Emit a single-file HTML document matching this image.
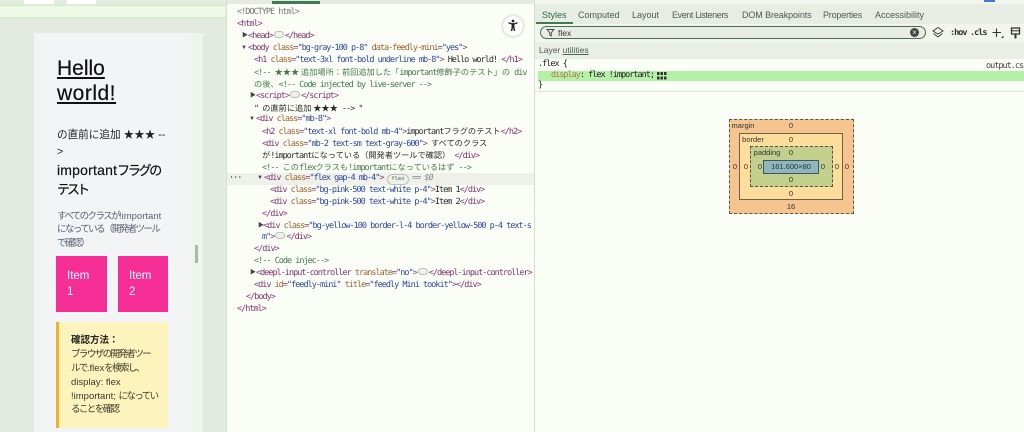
<!DOCTYPE html>
<html lang="ja"><head><meta charset="utf-8"><title>DevTools</title>
<style>
html,body{margin:0;padding:0}
html{background:#fbfdf7}
body{width:1024px;height:432px;overflow:hidden;position:relative;background:#fbfdf7;font-family:"Liberation Sans","Noto Sans CJK JP",sans-serif;filter:blur(.3px)}
.b{position:absolute}
.tx{position:absolute;white-space:pre;color:#333;line-height:14px;transform:translateY(-7px)}
.q{letter-spacing:-1.6px}
.s{font-size:9.5px}
.l{position:absolute;white-space:pre;font-family:"DejaVu Sans Mono","Noto Sans CJK JP",monospace;font-size:8.5px;letter-spacing:-.997px;line-height:12px;height:12px;color:#555;text-rendering:geometricPrecision;transform:translateY(-6px)}
.l i{font-style:normal;font-family:"Noto Sans CJK JP",sans-serif;font-size:8.2px;letter-spacing:0}
.t{color:#86336f}.a{color:#a05f2c}.v{color:#2f46a0}.c{color:#447a4c}.k{color:#2a2a2a}
.tri{position:absolute;font-size:6px;line-height:6px;color:#444;transform:translateY(-3px)}
.dots{display:inline-block;width:8px;height:5px;border:1px solid #b8c4b0;border-radius:4px;vertical-align:0;margin:0 1px;background:#eef2ea}
.tab{position:absolute;top:9px;font-size:9px;line-height:12px;color:#4b5a50;white-space:pre}
.m{position:absolute;font-size:7.5px;line-height:10px;color:#333;transform:translate(-50%,-5px);white-space:pre}
</style></head><body>

<!-- left page pane -->
<div class="b" style="left:0;top:0;width:227px;height:432px;background:#e3eadf"></div>
<div class="b" style="left:24px;top:0;width:30px;height:4px;background:#fff"></div>
<div class="b" style="left:67px;top:0;width:29px;height:4px;background:#fff"></div>
<div class="b" style="left:0;top:5px;width:225px;height:13px;background:#eefae6;border-top:1px solid #d4eec8;border-bottom:1px solid #cdeec0;box-sizing:border-box"></div>
<div class="b" style="left:34px;top:33px;width:169px;height:399px;background:#f3f4f6"></div>
<div class="b" style="left:190px;top:33px;width:13px;height:399px;background:#eef5ea"></div>
<div class="b" style="left:195px;top:245px;width:3px;height:18px;background:#aeb6b2"></div>

<div class="tx" style="left:57px;top:69px;font-size:21px;line-height:24px;transform:translateY(-12px);color:#111;text-decoration:underline;-webkit-text-stroke:.2px #111">Hello</div>
<div class="tx" style="left:57px;top:94px;font-size:21px;line-height:24px;transform:translateY(-12px);color:#111;text-decoration:underline;letter-spacing:.5px;-webkit-text-stroke:.2px #111">world!</div>
<div class="tx" style="left:57px;top:135px;font-size:10.6px;color:#222">の直前に追加 ★★★ --</div>
<div class="tx" style="left:57px;top:152px;font-size:10.6px;color:#222">&gt;</div>
<div class="tx" style="left:57px;top:170px;font-size:14px;letter-spacing:.2px;color:#111;-webkit-text-stroke:.2px #111">important<span style="font-size:13px;letter-spacing:-2.3px">フラグの</span></div>
<div class="tx" style="left:57px;top:190px;font-size:13px;letter-spacing:-3px;color:#111;-webkit-text-stroke:.2px #111">テスト</div>
<div class="tx s" style="left:57px;top:217px;color:#5a6170"><span class="q">すべてのクラスが</span>!important</div>
<div class="tx s q" style="left:57px;top:230px;color:#5a6170">になっている（開発者ツール</div>
<div class="tx s q" style="left:57px;top:244px;color:#5a6170">で確認）</div>

<div class="b" style="left:56px;top:256px;width:51px;height:56px;background:#f52e96"></div>
<div class="b" style="left:118px;top:256px;width:50px;height:56px;background:#f52e96"></div>
<div class="tx" style="left:67px;top:276px;font-size:11.5px;color:#fff">Item</div>
<div class="tx" style="left:67px;top:292px;font-size:11.5px;color:#fff">1</div>
<div class="tx" style="left:129px;top:276px;font-size:11.5px;color:#fff">Item</div>
<div class="tx" style="left:129px;top:292px;font-size:11.5px;color:#fff">2</div>

<div class="b" style="left:56px;top:322px;width:112px;height:106px;background:#fdf4bd"></div>
<div class="b" style="left:56px;top:322px;width:3px;height:106px;background:#eab52a"></div>
<div class="tx s" style="left:71px;top:341px;color:#222;font-weight:bold">確認方法：</div>
<div class="tx s q" style="left:71px;top:355px;color:#3c3a2a">ブラウザの開発者ツー</div>
<div class="tx s" style="left:71px;top:369px;color:#3c3a2a"><span class="q">ルで</span>.flex<span class="q">を検索し、</span></div>
<div class="tx s" style="left:71px;top:383px;color:#3c3a2a">display: flex</div>
<div class="tx s" style="left:71px;top:397px;color:#3c3a2a">!important; <span class="q">になってい</span></div>
<div class="tx s q" style="left:71px;top:410px;color:#3c3a2a">ることを確認</div>

<!-- elements panel -->
<div class="b" style="left:226px;top:0;width:309px;height:432px;background:#fbfdf7;border-left:1px solid #cfe6c4;border-right:1px solid #cfe6c4;box-sizing:border-box"></div>
<div class="b" style="left:227px;top:0;width:307px;height:4px;background:#e6ebe2"></div>
<div class="b" style="left:272px;top:1px;width:48px;height:3px;background:#3f7a55"></div>
<div class="b" style="left:227px;top:173px;width:307px;height:12px;background:#eef0ea"></div>

<div class="b" style="left:503px;top:16px;width:20px;height:20px;border-radius:50%;background:#fff;box-shadow:0 0 3px #aab5a8"></div>
<svg class="b" style="left:507px;top:19px" width="12" height="13" viewBox="0 0 12 13"><circle cx="6" cy="2" r="1.4" fill="#222"/><path d="M1.5 3.8 L4.5 4.8 H7.5 L10.5 3.8" stroke="#222" stroke-width="1.3" fill="none"/><path d="M4.6 4.6 H7.4 V8 L8.2 12 H6.8 L6 8.8 L5.2 12 H3.8 L4.6 8Z" fill="#222"/></svg>

<div class="l" style="left:237px;top:12px;color:#777">&lt;!DOCTYPE html&gt;</div>
<div class="l t" style="left:237px;top:24px">&lt;html&gt;</div>
<div class="tri" style="left:242px;top:36px">▶</div>
<div class="l t" style="left:248px;top:36px">&lt;head&gt;<span class="dots"></span>&lt;/head&gt;</div>
<div class="tri" style="left:241px;top:48px">▼</div>
<div class="l t" style="left:248px;top:48px">&lt;body <span class="a">class</span>=<span class="v">"bg-gray-100 p-8"</span> <span class="a">data-feedly-mini</span>=<span class="v">"yes"</span>&gt;</div>
<div class="l t" style="left:254px;top:60px">&lt;h1 <span class="a">class</span>=<span class="v">"text-3xl font-bold underline mb-8"</span>&gt; <span class="k">Hello world! </span>&lt;/h1&gt;</div>
<div class="l c" style="left:254px;top:72px">&lt;!-- <i>★★★ 追加場所：前回追加した「</i>important<i>修飾子のテスト」の</i> div</div>
<div class="l c" style="left:254px;top:84px"><i>の後、</i>&lt;!-- Code injected by live-server --&gt;</div>
<div class="tri" style="left:250px;top:96px">▶</div>
<div class="l t" style="left:256px;top:96px">&lt;script&gt;<span class="dots"></span>&lt;/script&gt;</div>
<div class="l k" style="left:254px;top:108px">" <i>の直前に追加 ★★★</i> --&gt; "</div>
<div class="tri" style="left:249px;top:119px">▼</div>
<div class="l t" style="left:256px;top:119px">&lt;div <span class="a">class</span>=<span class="v">"mb-8"</span>&gt;</div>
<div class="l t" style="left:262px;top:131px">&lt;h2 <span class="a">class</span>=<span class="v">"text-xl font-bold mb-4"</span>&gt;<span class="k">important<i>フラグのテスト</i></span>&lt;/h2&gt;</div>
<div class="l t" style="left:262px;top:143px">&lt;div <span class="a">class</span>=<span class="v">"mb-2 text-sm text-gray-600"</span>&gt; <span class="k"><i>すべてのクラス</i></span></div>
<div class="l k" style="left:262px;top:155px"><i>が</i>!important<i>になっている（開発者ツールで確認）</i> <span class="t">&lt;/div&gt;</span></div>
<div class="l c" style="left:262px;top:167px">&lt;!-- <i>この</i>flex<i>クラスも</i>!important<i>になっているはず</i> --&gt;</div>
<div class="l k" style="left:229px;top:178px">···</div>
<div class="tri" style="left:257px;top:178px">▼</div>
<div class="l t" style="left:264px;top:178px">&lt;div <span class="a">class</span>=<span class="v">"flex gap-4 mb-4"</span>&gt;</div>
<div class="b" style="left:387px;top:174px;width:20px;height:9px;border:1px solid #b9c4b4;border-radius:6px;font:5.5px/9px 'DejaVu Sans Mono',monospace;color:#555;text-align:center;box-sizing:content-box">flex</div>
<div class="l" style="left:412px;top:178px;color:#888;font-style:italic">== $0</div>
<div class="l t" style="left:270px;top:190px">&lt;div <span class="a">class</span>=<span class="v">"bg-pink-500 text-white p-4"</span>&gt;<span class="k">Item 1</span>&lt;/div&gt;</div>
<div class="l t" style="left:270px;top:202px">&lt;div <span class="a">class</span>=<span class="v">"bg-pink-500 text-white p-4"</span>&gt;<span class="k">Item 2</span>&lt;/div&gt;</div>
<div class="l t" style="left:262px;top:214px">&lt;/div&gt;</div>
<div class="tri" style="left:258px;top:226px">▶</div>
<div class="l t" style="left:263px;top:226px">&lt;div <span class="a">class</span>=<span class="v">"bg-yellow-100 border-l-4 border-yellow-500 p-4 text-s</span></div>
<div class="l t" style="left:262px;top:237px"><span class="v">m"</span>&gt;<span class="dots"></span>&lt;/div&gt;</div>
<div class="l t" style="left:254px;top:249px">&lt;/div&gt;</div>
<div class="l c" style="left:254px;top:261px">&lt;!-- Code injec--&gt;</div>
<div class="tri" style="left:250px;top:273px">▶</div>
<div class="l t" style="left:256px;top:273px">&lt;deepl-input-controller <span class="a">translate</span>=<span class="v">"no"</span>&gt;<span class="dots"></span>&lt;/deepl-input-controller&gt;</div>
<div class="l t" style="left:254px;top:285px">&lt;div <span class="a">id</span>=<span class="v">"feedly-mini"</span> <span class="a">title</span>=<span class="v">"feedly Mini tookit"</span>&gt;&lt;/div&gt;</div>
<div class="l t" style="left:246px;top:297px">&lt;/body&gt;</div>
<div class="l t" style="left:237px;top:309px">&lt;/html&gt;</div>

<!-- styles panel -->
<div class="b" style="left:535px;top:0;width:489px;height:4px;background:#f3f6ef"></div>
<div class="b" style="left:535px;top:4px;width:489px;height:20px;background:#e8ede4"></div>
<div class="b" style="left:535px;top:24px;width:489px;height:18px;background:#f1f5ec"></div>
<div class="b" style="left:535px;top:42px;width:489px;height:17px;background:#e9eee6"></div>
<div class="b" style="left:984px;top:0;width:11px;height:2px;background:#3b78d8"></div>
<div class="tab" style="left:542px;color:#2f6b4a">Styles</div>
<div class="b" style="left:536px;top:22px;width:37px;height:2px;background:#3f7a55"></div>
<div class="tab" style="left:578px">Computed</div>
<div class="tab" style="left:632px">Layout</div>
<div class="tab" style="left:672px;letter-spacing:-.4px">Event Listeners</div>
<div class="tab" style="left:742px;letter-spacing:-.1px">DOM Breakpoints</div>
<div class="tab" style="left:823px;letter-spacing:-.2px">Properties</div>
<div class="tab" style="left:875px">Accessibility</div>

<div class="b" style="left:540px;top:26px;width:386px;height:13px;border:1.5px solid #4a6b58;border-radius:8px;background:#e8ede4;box-sizing:border-box"></div>
<svg class="b" style="left:546px;top:28px" width="9" height="9" viewBox="0 0 9 9"><path d="M1 1.5H8L5.2 4.8V8L3.8 7V4.8Z" fill="none" stroke="#444" stroke-width=".9"/></svg>
<div class="tab" style="left:558px;top:27px;font-size:8.5px;color:#333">flex</div>
<div class="b" style="left:910px;top:28px;width:9px;height:9px;border-radius:50%;background:#444;color:#eee;font:8px/9px 'Liberation Sans',sans-serif;text-align:center">×</div>
<svg class="b" style="left:932px;top:26px" width="12" height="13" viewBox="0 0 12 13"><path d="M6 1.5L11 5L6 8L1 5Z M1.5 7.5L6 11L10.5 7.5" fill="none" stroke="#444" stroke-width="1"/></svg>
<div class="l" style="left:950px;top:33px;color:#333;font-weight:bold">:hov</div>
<div class="l" style="left:970px;top:33px;color:#333;font-weight:bold">.cls</div>
<svg class="b" style="left:991px;top:27px" width="13" height="12" viewBox="0 0 13 12"><path d="M5.5 1.5V10 M1.5 5.5H10" stroke="#333" stroke-width="1.1"/><path d="M10 11L12.5 11L12.5 8.5Z" fill="#333"/></svg>
<svg class="b" style="left:1010px;top:27px" width="11" height="13" viewBox="0 0 11 13"><path d="M1.5 1H9.5V7H1.5Z" fill="none" stroke="#333" stroke-width="1.3"/><path d="M1.5 3.8H9.5" stroke="#333"/><path d="M4.5 7H6.5V11.5H4.5Z" fill="#333"/></svg>

<div class="tab" style="left:539px;top:44px;font-size:8.5px;color:#555">Layer <span style="text-decoration:underline;color:#4c6655">utilities</span></div>
<div class="b" style="left:535px;top:59px;width:489px;height:33px;background:#fbfdf7;border-bottom:1px solid #dbe6d4;box-sizing:border-box"></div>
<div class="b" style="left:538px;top:71px;width:486px;height:10px;background:#b4f0a8"></div>
<div class="l" style="left:538px;top:64px;color:#222">.flex {</div>
<div class="l" style="left:986px;top:66px;color:#444">output.cs</div>
<div class="l" style="left:551px;top:75px;color:#222"><span style="color:#b07a4a">display</span>: flex !important;</div>
<svg class="b" style="left:657px;top:72px" width="10" height="9" viewBox="0 0 10 9"><path d="M0 0h2.5v3H0zM3.5 0h2.5v3H3.5zM7 0h2.5v3H7zM0 4.5h2.5v3H0zM3.5 4.5h2.5v3H3.5zM7 4.5h2.5v3H7z" fill="#333"/></svg>
<div class="l" style="left:538px;top:85px;color:#222">}</div>

<!-- box model -->
<div class="b" style="left:729px;top:119px;width:125px;height:95px;background:#f6c48f;border:1px dashed #555;box-sizing:border-box"></div>
<div class="b" style="left:739px;top:133px;width:104px;height:67px;background:#fddd9b;border:1px solid #6e6248;box-sizing:border-box"></div>
<div class="b" style="left:750px;top:146px;width:83px;height:41px;background:#c3d08b;border:1px dashed #555;box-sizing:border-box"></div>
<div class="b" style="left:763px;top:160px;width:56px;height:14px;background:#8cb6c0;border:1px solid #3f5560;box-sizing:border-box"></div>
<div class="m" style="left:743px;top:126px">margin</div>
<div class="m" style="left:753px;top:140px">border</div>
<div class="m" style="left:767px;top:153px">padding</div>
<div class="m" style="left:791px;top:167px">161.600×80</div>
<div class="m" style="left:791px;top:126px">0</div>
<div class="m" style="left:791px;top:140px">0</div>
<div class="m" style="left:791px;top:153px">0</div>
<div class="m" style="left:791px;top:180px">0</div>
<div class="m" style="left:791px;top:194px">0</div>
<div class="m" style="left:791px;top:207px">16</div>
<div class="m" style="left:735px;top:167px">0</div>
<div class="m" style="left:746px;top:167px">0</div>
<div class="m" style="left:760px;top:167px">0</div>
<div class="m" style="left:823px;top:167px">0</div>
<div class="m" style="left:837px;top:167px">0</div>
<div class="m" style="left:847px;top:167px">0</div>
</body></html>
